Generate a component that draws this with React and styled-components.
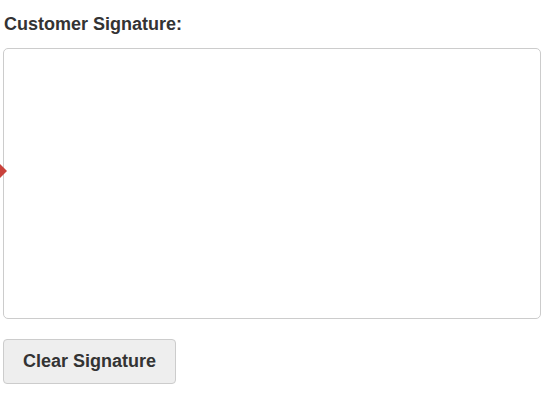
import React from 'react';
import styled, { createGlobalStyle } from 'styled-components';

const GlobalStyle = createGlobalStyle`
  html, body {
    margin: 0;
    padding: 0;
    background: #fff;
  }
  body {
    font-family: "Liberation Sans", Arial, sans-serif;
  }
`;

const Page = styled.div`
  position: relative;
  width: 552px;
  height: 402px;
  padding: 14px 11px 0 3px;
  box-sizing: border-box;
  display: flex;
  flex-direction: column;
`;

const Label = styled.label`
  font-size: 18px;
  font-weight: bold;
  color: #333;
  padding-left: 1px;
  line-height: 20px;
`;

const Pad = styled.div`
  margin-top: 14px;
  height: 269px;
  border: 1px solid #ccc;
  border-radius: 5px;
  background: #fff;
`;

const Marker = styled.div`
  position: absolute;
  left: 0;
  top: 164px;
  width: 0;
  height: 0;
  border-top: 7px solid transparent;
  border-bottom: 7px solid transparent;
  border-left: 7px solid #c9423b;
`;

const Button = styled.button`
  align-self: flex-start;
  margin-top: 20px;
  width: 173px;
  height: 45px;
  border: 1px solid #ccc;
  border-radius: 4px;
  background: #eee;
  color: #333;
  font-family: "Liberation Sans", Arial, sans-serif;
  font-size: 18px;
  font-weight: bold;
  cursor: pointer;
`;

const App = () => {
  return (
    <>
      <GlobalStyle />
      <Page>
        <Label>Customer Signature:</Label>
        <Pad />
        <Marker />
        <Button>Clear Signature</Button>
      </Page>
    </>
  );
};

export default App;
